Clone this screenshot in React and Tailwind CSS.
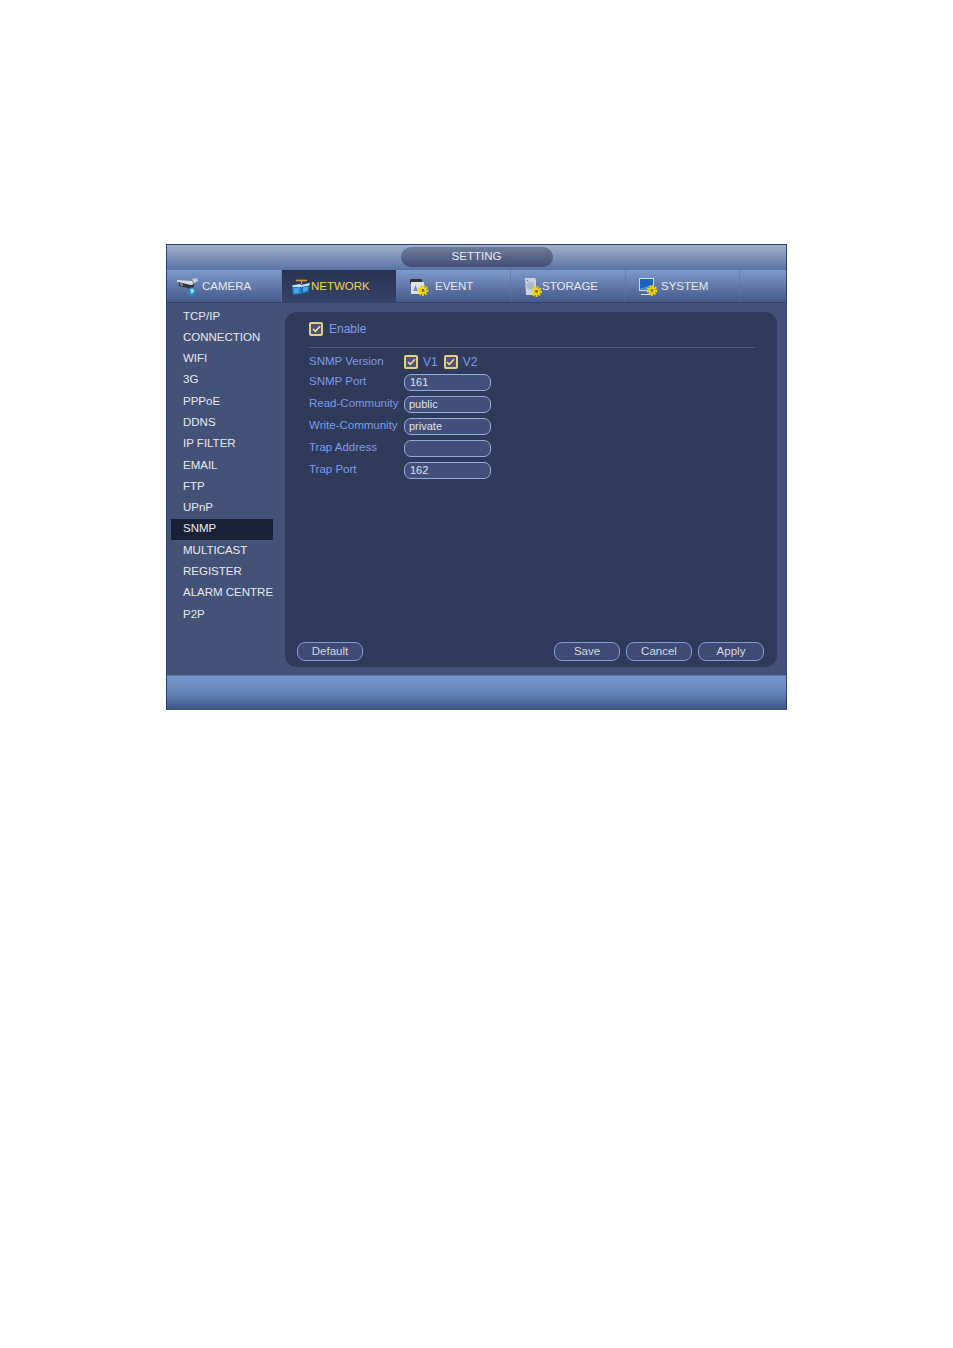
import React from 'react';

const menu = ['TCP/IP', 'CONNECTION', 'WIFI', '3G', 'PPPoE', 'DDNS', 'IP FILTER', 'EMAIL', 'FTP', 'UPnP', 'SNMP', 'MULTICAST', 'REGISTER', 'ALARM CENTRE', 'P2P'];

function Gear({ x, y }) {
  return (
    <g transform={`translate(${x} ${y})`}>
      <circle r="4.4" fill="none" stroke="#f5d400" strokeWidth="2" strokeDasharray="1.8 1.1" />
      <circle r="3.6" fill="#f5d400" />
      <circle r="1.4" fill="#6b7250" />
    </g>
  );
}

function CameraIcon() {
  return (
    <svg width="22" height="20" viewBox="0 0 22 20">
      <path d="M0 3l15 1 2 4-3 2L1 7z" fill="#d9dde2" />
      <path d="M1 5l13 3 3-1v3l-3 2L2 9z" fill="#33383f" />
      <path d="M3 6l3 1v2L3 8z" fill="#8e959e" />
      <path d="M15 2l5-1 1 3-4 2z" fill="#c7ccd2" />
      <circle cx="15" cy="15" r="4.5" fill="#2a86bd" />
      <path d="M13 12.500l3-1 1.500 3-3 2.500z" fill="#a6dbf0" />
    </svg>
  );
}

function NetworkIcon() {
  return (
    <svg width="20" height="18" viewBox="0 0 20 18">
      <path d="M5 2.500h11" stroke="#d9953a" strokeWidth="1.6" fill="none" />
      <path d="M10.500 3v3" stroke="#d9953a" strokeWidth="1.2" fill="none" />
      <path d="M1 7.500l8-1.500 1 1v9l-8 1z" fill="#2a7fc4" />
      <path d="M10 7l9-2-1 9-8 2z" fill="#1f6fb8" />
      <path d="M1 7.500l8-1.500 1 1 9-2-1 2.500-8 1.500H2z" fill="#c6e2f3" />
      <path d="M3 10h5v5H3zM12 9.500l5-1-.5 4.500-4.500 1z" fill="#4aa8e8" />
    </svg>
  );
}

function EventIcon() {
  return (
    <svg width="20" height="18" viewBox="0 0 20 18">
      <rect x="1" y="1" width="12" height="5" rx="1" fill="#2f343b" />
      <rect x="2" y="4" width="13" height="12" fill="#dce3eb" />
      <path d="M4 13l2.500-6 2.500 6z" fill="#7a90b3" />
      <Gear x={14} y={12.5} />
    </svg>
  );
}

function StorageIcon() {
  return (
    <svg width="18" height="20" viewBox="0 0 18 20">
      <path d="M1 1h10l1 2v15H2z" fill="#c9d3df" />
      <circle cx="6.500" cy="8.500" r="3.800" fill="#aab8ca" />
      <circle cx="3.500" cy="3.500" r="0.8" fill="#6f7d90" />
      <Gear x={12.5} y={14.5} />
    </svg>
  );
}

function SystemIcon() {
  return (
    <svg width="20" height="20" viewBox="0 0 20 20">
      <rect x="1" y="1" width="15" height="13" fill="#d3dbe5" />
      <path d="M2 2h13v6L2 12z" fill="#1c63c4" />
      <path d="M2 12l13-4v5H2z" fill="#3b8ae0" />
      <path d="M3 17h11l1 1H3z" fill="#dfe5ec" />
      <Gear x={14} y={13.5} />
    </svg>
  );
}

function Check() {
  return (
    <span className="flex h-[14px] w-[14px] items-center justify-center rounded-[2px] border-2 border-[#e6cf83] bg-[#4a5578]">
      <svg width="9" height="8" viewBox="0 0 9 8">
        <path d="M1 4l2.400 2.400L8 1.200" fill="none" stroke="#f2dc92" strokeWidth="1.6" />
      </svg>
    </span>
  );
}

function Field({ label, value, indent }) {
  return (
    <div className="flex h-[22px] items-center">
      <span className="w-[95px] whitespace-nowrap pb-[1px] text-[11.5px] text-[#7f9be8]">{label}</span>
      <span className={`flex h-[17px] w-[87px] items-center rounded-[7px] border border-[#92acdc] bg-[#434f79] text-[11px] text-[#dfe3ea] ${indent ? 'pl-[5px]' : 'pl-[4px]'}`}>
        {value}
      </span>
    </div>
  );
}

function Btn({ label }) {
  return (
    <span className="flex h-[19px] w-[66px] items-center justify-center rounded-[8px] border border-[#7e9cd8] bg-[#3f4b75] text-[11.5px] text-[#d5d9e0]">
      {label}
    </span>
  );
}

function Tab({ icon, label, width, gap, pad, active }) {
  return (
    <div
      className={`flex h-full items-center pt-[1px] ${active ? 'bg-gradient-to-b from-[#283350] to-[#36436a] text-[#f2d250]' : 'border-r border-[#5f769f]/60 text-[#e6e9ee]'}`}
      style={{ width, paddingLeft: pad, gap }}
    >
      {icon}
      <span className="text-[11.5px]">{label}</span>
    </div>
  );
}

export default function App() {
  return (
    <div className="min-h-[1348px] bg-white pl-[166px] pt-[244px] font-['Liberation_Sans',sans-serif]">
      <div className="w-[621px] border-l border-r border-[#2f4170]">
        {/* title bar */}
        <div className="flex h-[26px] items-center justify-center border-t border-[#2f4170] bg-gradient-to-b from-[#a3b1c8] to-[#5874a6]">
          <div className="mb-[2px] flex h-[20px] w-[152px] items-center justify-center rounded-[10px] bg-gradient-to-b from-[#6f7c98] to-[#434f78] text-[11.5px] text-[#e8eaee]">
            SETTING
          </div>
        </div>

        {/* tabs */}
        <div className="flex h-[33px] items-center border-b border-[#33446f] bg-gradient-to-b from-[#7d9aca] to-[#455a8a]">
          <Tab icon={<CameraIcon />} label="CAMERA" width={115} gap={3} pad={10} />
          <Tab icon={<NetworkIcon />} label="NETWORK" width={114} gap={0} pad={9} active />
          <Tab icon={<EventIcon />} label="EVENT" width={115} gap={6} pad={13} />
          <Tab icon={<StorageIcon />} label="STORAGE" width={115} gap={0} pad={13} />
          <Tab icon={<SystemIcon />} label="SYSTEM" width={114} gap={3} pad={12} />
        </div>

        {/* body */}
        <div className="flex h-[373px] border-b border-[#5c76a8] bg-[#445278] pr-[9px]">
          <div className="w-[118px] pl-[4px] pt-[3px]">
            {menu.map((m) => (
              <div
                key={m}
                className={`flex h-[21.3px] w-[102px] items-center whitespace-nowrap pb-[1px] pl-[12px] text-[11.5px] text-[#e6e8ee] ${m === 'SNMP' ? 'bg-[#1a2238]' : ''}`}
              >
                {m}
              </div>
            ))}
          </div>

          <div className="mb-[8px] mt-[9px] flex flex-1 flex-col rounded-[12px] bg-[#303a5a] pb-[6px] pl-[12px] pr-[13px]">
            <div className="ml-[12px] mr-[9px] flex h-[36px] items-center gap-[6px] border-b border-[#4b587f] pb-[2px] text-[12px] text-[#7f9be8]">
              <Check />
              <span>Enable</span>
            </div>

            <div className="mx-[12px] mt-[4px] flex h-[19px] items-center">
              <span className="w-[95px] pt-[1px] text-[11.5px] text-[#7f9be8]">SNMP Version</span>
              <Check />
              <span className="ml-[5px] pt-[1px] text-[12px] text-[#7f9be8]">V1</span>
              <span className="ml-[6px]"><Check /></span>
              <span className="ml-[5px] pt-[1px] text-[12px] text-[#7f9be8]">V2</span>
            </div>
            <div className="mx-[12px]">
              <Field label="SNMP Port" value="161" indent />
              <Field label="Read-Community" value="public" />
              <Field label="Write-Community" value="private" />
              <Field label="Trap Address" value="" />
              <Field label="Trap Port" value="162" indent />
            </div>

            <div className="mt-auto flex items-center">
              <Btn label="Default" />
              <div className="ml-auto flex gap-[6px]">
                <Btn label="Save" />
                <Btn label="Cancel" />
                <Btn label="Apply" />
              </div>
            </div>
          </div>
        </div>

        {/* footer */}
        <div className="h-[34px] bg-gradient-to-b from-[#7898cc] via-[#6484b8] to-[#3d5185]" />
      </div>
    </div>
  );
}
